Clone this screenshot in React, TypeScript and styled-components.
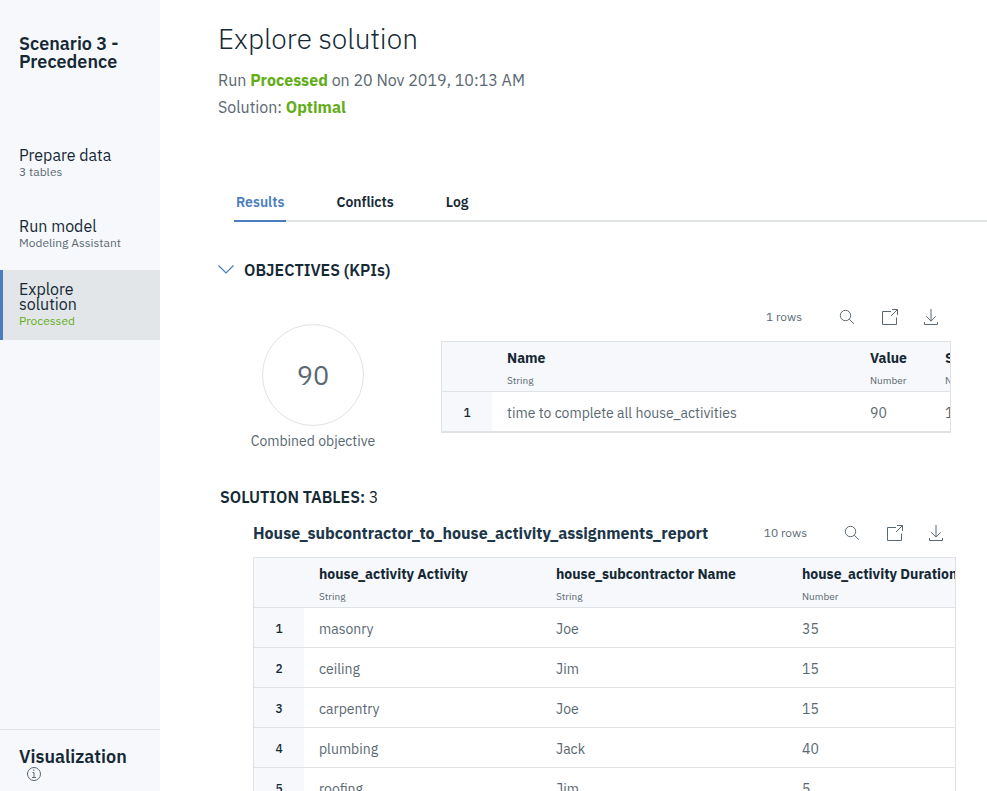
import React, { useState } from "react";
import styled, { createGlobalStyle, css } from "styled-components";

const color = {
  ink: "#152935",
  navy: "#1d3649",
  gray: "#5a6872",
  green: "#63ad19",
  blue: "#4a7dbd",
  line: "#dfe3e6",
  panel: "#f6f8fc",
  active: "#e2e6e9",
};

const GlobalStyle = createGlobalStyle`
  *, *::before, *::after { box-sizing: border-box; }
  body {
    margin: 0;
    background: #fff;
    color: ${color.ink};
    font-family: "IBM Plex Sans", Roboto, "Noto Sans", sans-serif;
    font-size: 14px;
  }
  h1, h2, h3, p { margin: 0; }
  button { font: inherit; color: inherit; background: none; border: 0; padding: 0; cursor: pointer; }
`;

const Shell = styled.div`
  display: grid;
  grid-template-columns: 160px minmax(0, 1fr);
  height: 100vh;
  overflow: hidden;
`;

const Sidebar = styled.aside`
  display: flex;
  flex-direction: column;
  background: ${color.panel};
`;

const ScenarioName = styled.h2`
  padding: 35px 19px 0;
  height: 128px;
  font-size: 18px;
  line-height: 18px;
  font-weight: 600;
`;

const Steps = styled.nav`
  display: flex;
  flex-direction: column;
`;

const Step = styled.a<{ $active?: boolean }>`
  display: flex;
  flex-direction: column;
  justify-content: center;
  height: 71px;
  padding: 1px 56px 0 16px;
  border-left: 3px solid transparent;
  color: ${color.ink};
  text-decoration: none;
  ${({ $active }) =>
    $active &&
    css`
      height: 70px;
      background: ${color.active};
      border-left-color: ${color.blue};
    `}
`;

const StepTitle = styled.span<{ $wrap?: boolean }>`
  font-size: 16px;
  line-height: 15px;
  white-space: ${({ $wrap }) => ($wrap ? "normal" : "nowrap")};
`;

const StepNote = styled.span<{ $done?: boolean }>`
  margin-top: 1px;
  font-size: 12px;
  line-height: 16px;
  white-space: nowrap;
  color: ${({ $done }) => ($done ? color.green : color.gray)};
`;

const SidebarFooter = styled.div`
  display: flex;
  flex-direction: column;
  align-items: flex-start;
  margin-top: auto;
  height: 62px;
  padding: 17px 19px 0;
  border-top: 1px solid ${color.line};
`;

const FooterTitle = styled.h2`
  font-size: 18px;
  line-height: 19px;
  font-weight: 600;
`;

const InfoButton = styled.button`
  display: flex;
  margin-left: 7px;
  color: ${color.gray};
`;

const Main = styled.main`
  display: flex;
  flex-direction: column;
  overflow: hidden;
  padding-left: 58px;
`;

const PageTitle = styled.h1`
  margin-top: 20px;
  font-size: 28px;
  line-height: 38px;
  font-weight: 300;
`;

const Summary = styled.div`
  margin-top: 9px;
  font-size: 16px;
  line-height: 27px;
  color: ${color.gray};
`;

const Good = styled.strong`
  font-weight: 700;
  color: ${color.green};
`;

const Tabs = styled.div`
  display: flex;
  flex: none;
  gap: 48px;
  height: 40px;
  margin: 61px 0 0 16px;
  box-shadow: inset 0 -2px ${color.line};
`;

const Tab = styled.button<{ $active: boolean }>`
  padding: 2px 2px 0;
  font-size: 14px;
  line-height: 36px;
  font-weight: 600;
  border-bottom: 2px solid ${({ $active }) => ($active ? color.blue : "transparent")};
  color: ${({ $active }) => ($active ? color.blue : color.ink)};
`;

const SectionToggle = styled.button`
  display: flex;
  align-items: center;
  gap: 10px;
  margin-top: 38px;
  font-size: 16px;
  line-height: 20px;
  font-weight: 600;
  align-self: flex-start;
`;

const Kpis = styled.section`
  display: grid;
  grid-template-columns: 190px minmax(0, 1fr);
  column-gap: 33px;
  margin-top: 17px;
  padding-right: 36px;
`;

const Gauge = styled.figure`
  display: flex;
  flex-direction: column;
  align-items: center;
  gap: 5px;
  margin: 27px 0 0;
  color: ${color.gray};
`;

const GaugeRing = styled.div`
  display: grid;
  place-items: center;
  width: 102px;
  height: 102px;
  border: 1px solid ${color.line};
  border-radius: 50%;
  font-size: 27px;
  line-height: 36px;
`;

const GaugeLabel = styled.figcaption`
  font-size: 14px;
  line-height: 20px;
`;

const TableHeader = styled.div`
  display: flex;
  align-items: center;
  height: 40px;
  margin-bottom: 4px;
`;

const Count = styled.span`
  margin-left: auto;
  margin-right: 37px;
  font-size: 12px;
  line-height: 16px;
  color: ${color.gray};
`;

const Tools = styled.div`
  display: flex;
  align-items: center;
  gap: 24px;
  margin-right: 12px;
  color: ${color.gray};
`;

const ToolButton = styled.button`
  display: flex;
`;

const Frame = styled.div<{ $closed?: boolean }>`
  overflow: hidden;
  border: 1px solid ${color.line};
  border-bottom-width: ${({ $closed }) => ($closed ? "1px" : "0")};
`;

const Table = styled.table`
  table-layout: fixed;
  width: 100%;
  border-collapse: separate;
  border-spacing: 0;
  white-space: nowrap;
`;

const HeadCell = styled.th`
  height: 50px;
  padding: 4px 0 0 15px;
  text-align: left;
  vertical-align: middle;
  background: ${color.panel};
  border-bottom: 1px solid ${color.line};
`;

const ColumnName = styled.div`
  font-size: 14px;
  line-height: 20px;
  font-weight: 700;
`;

const ColumnType = styled.div`
  margin-top: 5px;
  font-size: 10px;
  line-height: 16px;
  font-weight: 400;
  color: ${color.gray};
`;

const IndexCell = styled.th`
  height: 40px;
  padding: 2px 0 0;
  font-size: 12px;
  font-weight: 500;
  text-align: center;
  background: ${color.panel};
  border-bottom: 1px solid ${color.line};
`;

const Cell = styled.td`
  height: 40px;
  padding: 3px 0 0 15px;
  font-size: 14px;
  color: ${color.gray};
  border-bottom: 1px solid ${color.line};
`;

const SolutionTitle = styled.h2`
  margin: 36px 0 0 2px;
  font-size: 16px;
  line-height: 20px;
  font-weight: 600;
`;

const SolutionCount = styled.span`
  font-weight: 400;
`;

const Solutions = styled.section`
  padding: 6px 31px 0 35px;
`;

const ReportName = styled.h3`
  font-size: 16px;
  line-height: 20px;
  font-weight: 700;
  color: ${color.navy};
`;

const strokeProps = { fill: "none", stroke: "currentColor", strokeWidth: 1 } as const;

const SearchIcon = () => (
  <svg width="16" height="16" viewBox="0 0 16 16" {...strokeProps} aria-hidden="true">
    <circle cx="6.5" cy="6.5" r="5.2" />
    <path d="M10.3 10.3 15 14.8" />
  </svg>
);

const OpenIcon = () => (
  <svg width="20" height="18" viewBox="0 0 20 18" {...strokeProps} aria-hidden="true">
    <path d="M12 3.5H3.5v13h14V9.5M13 1.5h5.5V7M18.5 1.5 12 8" />
  </svg>
);

const DownloadIcon = () => (
  <svg width="16" height="18" viewBox="0 0 16 18" {...strokeProps} aria-hidden="true">
    <path d="M8 1v12M3.2 8.3 8 13.1l4.8-4.8M1.5 14v2.5h13V14" />
  </svg>
);

const ChevronIcon = () => (
  <svg width="16" height="10" viewBox="0 0 16 10" fill="none" stroke={color.blue} strokeWidth="1.2" aria-hidden="true">
    <path d="M.5.5 8 8l7.500-7.500" />
  </svg>
);

const InfoIcon = () => (
  <svg width="16" height="16" viewBox="0 0 16 16" {...strokeProps} aria-hidden="true">
    <circle cx="8" cy="8" r="6.5" />
    <path d="M6.5 6.5H8v5M6 11.5h4" />
    <circle cx="7.8" cy="4.3" r=".7" fill="currentColor" stroke="none" />
  </svg>
);

type Column = { name: string; type: string; width?: number };

function TableTools({ rows }: { rows: number }) {
  return (
    <>
      <Count>{rows} rows</Count>
      <Tools>
        <ToolButton type="button" aria-label="Search"><SearchIcon /></ToolButton>
        <ToolButton type="button" aria-label="Open in new window"><OpenIcon /></ToolButton>
        <ToolButton type="button" aria-label="Download"><DownloadIcon /></ToolButton>
      </Tools>
    </>
  );
}

function DataTable({ label, columns, rows, closed }: { label: string; columns: Column[]; rows: string[][]; closed?: boolean }) {
  return (
    <Frame $closed={closed}>
      <Table aria-label={label}>
        <colgroup>
          <col width={50} />
          {columns.map((c) => <col key={c.name} width={c.width} />)}
        </colgroup>
        <thead>
          <tr>
            <HeadCell aria-label="Row" />
            {columns.map((c) => (
              <HeadCell key={c.name} scope="col">
                <ColumnName>{c.name}</ColumnName>
                <ColumnType>{c.type}</ColumnType>
              </HeadCell>
            ))}
          </tr>
        </thead>
        <tbody>
          {rows.map((row, i) => (
            <tr key={i}>
              <IndexCell scope="row">{i + 1}</IndexCell>
              {row.map((value, j) => <Cell key={j}>{value}</Cell>)}
            </tr>
          ))}
        </tbody>
      </Table>
    </Frame>
  );
}

const kpiColumns: Column[] = [
  { name: "Name", type: "String", width: 363 },
  { name: "Value", type: "Number", width: 75 },
  { name: "Scale", type: "Number" },
];

const reportColumns: Column[] = [
  { name: "house_activity Activity", type: "String", width: 237 },
  { name: "house_subcontractor Name", type: "String", width: 246 },
  { name: "house_activity Duration", type: "Number" },
];

const reportRows = [
  ["masonry", "Joe", "35"],
  ["ceiling", "Jim", "15"],
  ["carpentry", "Joe", "15"],
  ["plumbing", "Jack", "40"],
  ["roofing", "Jim", "5"],
];

const tabs = ["Results", "Conflicts", "Log"];
const reportName = "House_subcontractor_to_house_activity_assignments_report";

export default function App() {
  const [tab, setTab] = useState("Results");
  const [open, setOpen] = useState(true);
  return (
    <Shell>
      <GlobalStyle />
      <Sidebar>
        <ScenarioName>Scenario 3 - Precedence</ScenarioName>
        <Steps aria-label="Steps">
          <Step href="#prepare">
            <StepTitle>Prepare data</StepTitle>
            <StepNote>3 tables</StepNote>
          </Step>
          <Step href="#run">
            <StepTitle>Run model</StepTitle>
            <StepNote>Modeling Assistant</StepNote>
          </Step>
          <Step href="#explore" $active aria-current="page">
            <StepTitle $wrap>Explore solution</StepTitle>
            <StepNote $done>Processed</StepNote>
          </Step>
        </Steps>
        <SidebarFooter>
          <FooterTitle>Visualization</FooterTitle>
          <InfoButton type="button" aria-label="About visualization"><InfoIcon /></InfoButton>
        </SidebarFooter>
      </Sidebar>
      <Main>
        <PageTitle>Explore solution</PageTitle>
        <Summary>
          <p>Run <Good>Processed</Good> on 20 Nov 2019, 10:13 AM</p>
          <p>Solution: <Good>Optimal</Good></p>
        </Summary>
        <Tabs role="tablist">
          {tabs.map((name) => (
            <Tab key={name} type="button" role="tab" aria-selected={tab === name} $active={tab === name} onClick={() => setTab(name)}>
              {name}
            </Tab>
          ))}
        </Tabs>
        <SectionToggle type="button" aria-expanded={open} onClick={() => setOpen(!open)}>
          <ChevronIcon />
          OBJECTIVES (KPIs)
        </SectionToggle>
        {open && (
          <Kpis>
            <Gauge>
              <GaugeRing>90</GaugeRing>
              <GaugeLabel>Combined objective</GaugeLabel>
            </Gauge>
            <div>
              <TableHeader><TableTools rows={1} /></TableHeader>
              <DataTable label="Objectives" columns={kpiColumns} rows={[["time to complete all house_activities", "90", "1"]]} closed />
            </div>
          </Kpis>
        )}
        <SolutionTitle>SOLUTION TABLES: <SolutionCount>3</SolutionCount></SolutionTitle>
        <Solutions>
          <TableHeader>
            <ReportName>{reportName}</ReportName>
            <TableTools rows={10} />
          </TableHeader>
          <DataTable label={reportName} columns={reportColumns} rows={reportRows} />
        </Solutions>
      </Main>
    </Shell>
  );
}
